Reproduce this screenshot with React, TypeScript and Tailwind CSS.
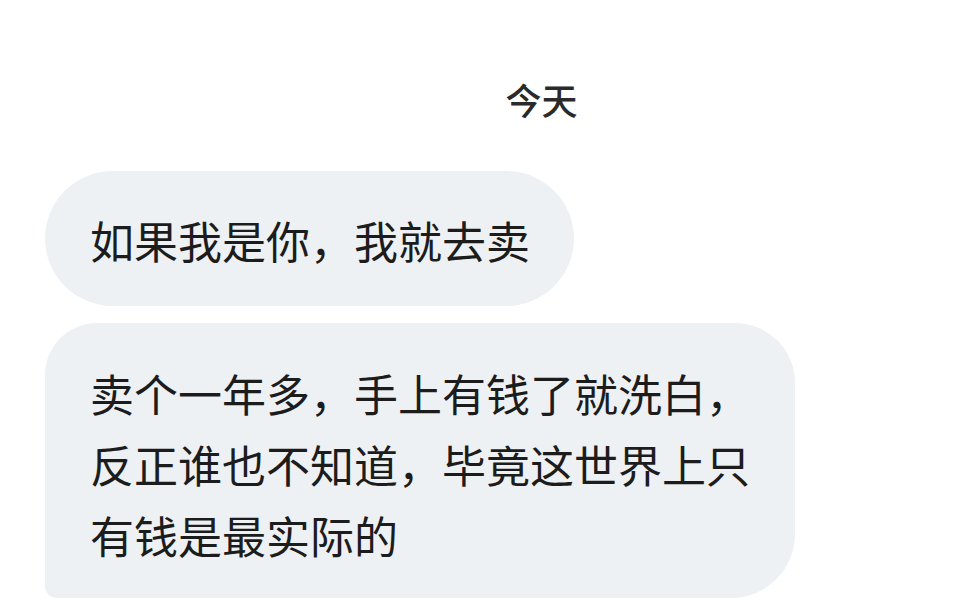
export default function App() {
  const font = { fontFamily: '"Noto Sans CJK SC", "Noto Sans", sans-serif' };

  return (
    <main className="w-[957px] h-[609px] overflow-hidden bg-white text-[#1c1c1c]" style={font}>
      <div className="flex justify-center pl-[126px] pt-[81px]">
        <span className="text-[36px] leading-none font-medium text-[#2a2a2a]">今天</span>
      </div>

      <div className="mt-[54px] flex flex-col items-start gap-[17px] pl-[45px]">
        <div className="rounded-full bg-[#eef1f3] pl-[45px] pr-[44px] pt-[34px] pb-[30px] text-[44px] leading-[71px]">
          如果我是你，我就去卖
        </div>

        <div className="w-[750px] rounded-tl-[52px] rounded-tr-[60px] rounded-br-[64px] rounded-bl-[12px] bg-[#eef1f3] pl-[45px] pr-[30px] pt-[35px] pb-[27px] text-[44px] leading-[71px]">
          <p>卖个一年多，手上有钱了就洗白，</p>
          <p>反正谁也不知道，毕竟这世界上只</p>
          <p>有钱是最实际的</p>
        </div>
      </div>
    </main>
  );
}
